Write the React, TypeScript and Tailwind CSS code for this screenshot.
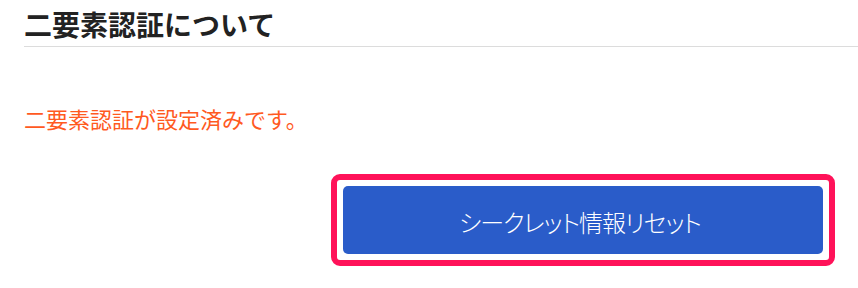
export default function App() {
  return (
    <div className="min-h-[288px] w-[858px] overflow-hidden bg-white font-['Noto_Sans_CJK_JP','Noto_Sans',sans-serif]">
      <section className="pl-[24px]">

        <h2 className="border-b border-[#dcdcdc] pt-[6px] pb-[4px] text-[28px] font-bold leading-[36px] text-[#222222]">
          二要素認証について
        </h2>

        <p className="mt-[55px] text-[22px] leading-[32px] text-[#ff5a1f]">
          二要素認証が設定済みです。
        </p>

        <div className="mt-[40px] flex justify-end pr-[23px]">
          <div className="rounded-[9px] border-[6px] border-[#ff1259] p-[6px]">
            <button
              type="button"
              className="flex h-[68px] w-[480px] items-center justify-center rounded-[5px] bg-[#2a5cc9] pt-[3px] pr-[6px] text-[24px] font-light tracking-[-1px] text-white [font-feature-settings:'palt']"
            >
              シークレット情報リセット
            </button>
          </div>
        </div>

      </section>
    </div>
  );
}
